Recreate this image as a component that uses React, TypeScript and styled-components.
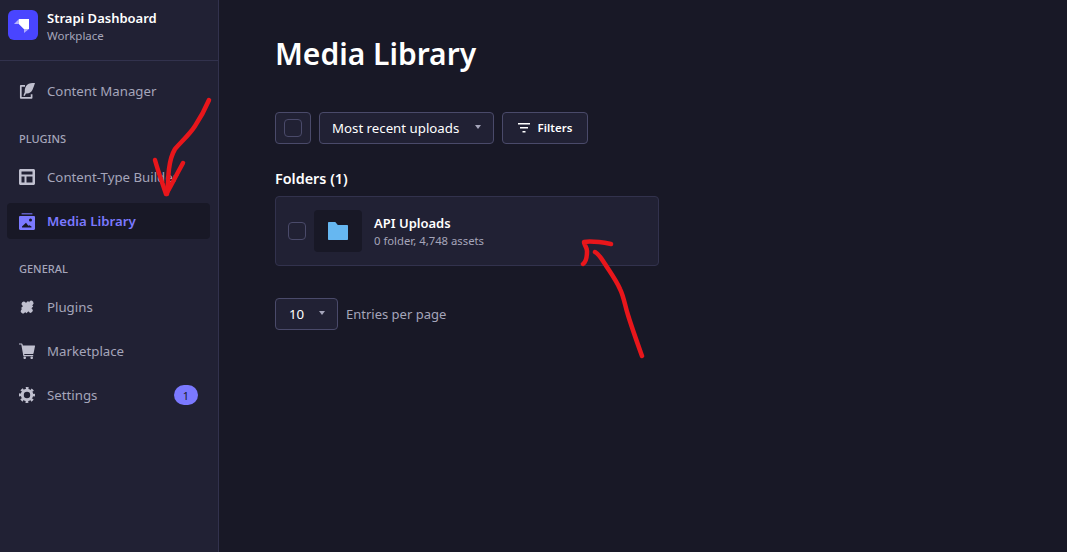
import React from 'react'
import styled, { createGlobalStyle } from 'styled-components'

const Colors = {
  sidebar: '#212134',
  page: '#181826',
  border: '#32324d',
  borderStrong: '#4a4a6a',
  white: '#ffffff',
  label: '#c0c0cf',
  muted: '#a5a5ba',
  primary: '#7b79ff',
  brand: '#4945ff',
  ann: '#e8161b',
}

const GlobalStyle = createGlobalStyle`
  html, body { margin: 0; padding: 0; background: ${Colors.page}; }
  body { font-family: "Noto Sans", "Open Sans", "Liberation Sans", sans-serif; overflow: hidden; }
  * { box-sizing: border-box; }
`

const ContentIcon = () => (
  <svg width="16" height="16" viewBox="0 0 16 16" fill="none">
    <path d="M6 2.800H1.800v12h10.800v-3.500" stroke="currentColor" strokeWidth="1.700" strokeLinejoin="round" />
    <path d="M16 0c-3.800-.2-7.300.5-8.900 3C6 4.800 5.600 7 5.800 9L4.400 12.500l1.200.4L7 10.400c2.800.3 5.200-.8 6.400-3.300C14.500 4.800 15.200 2.400 16 0z" fill="currentColor" />
  </svg>
)

const LayoutIcon = () => (
  <svg width="16" height="16" viewBox="0 0 16 16" fill="none">
    <path fillRule="evenodd" d="M1.500 0h13c.800 0 1.500.700 1.500 1.500v13c0 .800-.700 1.500-1.500 1.500h-13C.700 16 0 15.300 0 14.500v-13C0 .700.700 0 1.500 0zM2.500 2.500v3h11v-3h-11zm0 5v6h3v-6h-3zm5 0v6h6v-6h-6z" fill="currentColor" />
  </svg>
)

const MediaIcon = () => (
  <svg width="16" height="17" viewBox="0 0 16 17" fill="none">
    <rect x="2.500" y="0" width="11" height="1.600" rx=".6" fill="currentColor" opacity=".7" />
    <path fillRule="evenodd" d="M1.200 3h13.600c.700 0 1.200.500 1.200 1.200v11.600c0 .700-.500 1.200-1.200 1.200H1.200C.500 17 0 16.500 0 15.800V4.200C0 3.500.500 3 1.200 3zM11.500 5.500a1.500 1.500 0 1 0 0 3 1.500 1.500 0 0 0 0-3zM3 14.500h9.500v-1l-2-1.300-1.200.6L7 9.800l-4 3.700v1z" fill="currentColor" />
  </svg>
)

const PuzzleIcon = () => (
  <svg width="18" height="18" viewBox="0 0 18 18" fill="none">
    <g transform="rotate(-45 9 9)" fill="currentColor">
      <rect x="3.500" y="5" width="11" height="8.500" rx=".5" />
      <circle cx="9" cy="4" r="2.600" />
      <circle cx="9" cy="14.500" r="2.600" />
      <circle cx="2.500" cy="9.200" r="2.600" />
      <circle cx="15.500" cy="9.200" r="2.600" />
    </g>
  </svg>
)

const CartIcon = () => (
  <svg width="16" height="16" viewBox="0 0 16 16" fill="none">
    <path d="M0 .4h2.800c.3 0 .5.200.6.500L3.900 2.600h11.700c.3 0 .5.300.4.600l-1.500 7.200c-.1.300-.3.500-.6.500H5.200l.2 1.200H14.200v1.200H4.400L2.300 1.600H0V.4z" fill="currentColor" />
    <circle cx="5.700" cy="14.800" r="1.300" fill="currentColor" />
    <circle cx="12.700" cy="14.800" r="1.300" fill="currentColor" />
  </svg>
)

const GearIcon = () => (
  <svg width="16" height="16" viewBox="0 0 16 16" fill="none">
    <circle cx="8" cy="8" r="4.700" stroke="currentColor" strokeWidth="3" />
    <circle cx="8" cy="8" r="6.900" stroke="currentColor" strokeWidth="2.200" strokeDasharray="2.800 2.620" strokeDashoffset="1.400" />
  </svg>
)

const FilterIcon = () => (
  <svg width="12" height="10" viewBox="0 0 12 10" fill="none">
    <rect x="0" y="0" width="12" height="1.500" fill="currentColor" />
    <rect x="2" y="4" width="8" height="1.500" fill="currentColor" />
    <rect x="4.500" y="8" width="3" height="1.500" fill="currentColor" />
  </svg>
)

const FolderIcon = () => (
  <svg width="20" height="18" viewBox="0 0 20 18" fill="none">
    <path d="M0 1c0-.6.4-1 1-1h6.300l2.500 3H19c.6 0 1 .4 1 1v13c0 .6-.4 1-1 1H1c-.6 0-1-.4-1-1V1z" fill="#66b7f1" />
  </svg>
)

const navGroups = [
  { items: [{ label: 'Content Manager', icon: <ContentIcon /> }] },
  {
    title: 'PLUGINS',
    items: [
      { label: 'Content-Type Builder', icon: <LayoutIcon /> },
      { label: 'Media Library', icon: <MediaIcon />, active: true },
    ],
  },
  {
    title: 'GENERAL',
    items: [
      { label: 'Plugins', icon: <PuzzleIcon /> },
      { label: 'Marketplace', icon: <CartIcon /> },
      { label: 'Settings', icon: <GearIcon />, badge: 1 },
    ],
  },
]

export default function App() {
  return (
    <>
      <GlobalStyle />
      <Shell>
        <Sidebar>
          <Brand>
            <BrandLogo>
              <svg width="30" height="30" viewBox="0 0 30 30" fill="none">
                <path d="M11 9h10v10h-5l-5-5V9z" fill="#ffffff" />
                <path d="M11 9v5H6l5-5z" fill="#ffffff" opacity=".6" />
                <path d="M11 14h5v5l-5-5z" fill="#ffffff" opacity=".8" />
                <path d="M16 19h5l-5 4v-4z" fill="#ffffff" opacity=".55" />
              </svg>
            </BrandLogo>
            <BrandText>
              <BrandName>Strapi Dashboard</BrandName>
              <BrandSub>Workplace</BrandSub>
            </BrandText>
          </Brand>
          <Nav>
            {navGroups.map((group, i) => (
              <NavGroup key={i}>
                {group.title && <GroupTitle>{group.title}</GroupTitle>}
                {group.items.map((item: any) => (
                  <NavItem key={item.label} $active={item.active}>
                    <NavIcon>{item.icon}</NavIcon>
                    <NavLabel $active={item.active}>{item.label}</NavLabel>
                    {item.badge && <Badge>{item.badge}</Badge>}
                  </NavItem>
                ))}
              </NavGroup>
            ))}
          </Nav>
        </Sidebar>

        <Main>
          <Title>Media Library</Title>
          <Toolbar>
            <CheckFrame>
              <Checkbox />
            </CheckFrame>
            <SortSelect>
              <SelectText>Most recent uploads</SelectText>
              <Caret />
            </SortSelect>
            <FilterButton>
              <FilterIcon />
              <span>Filters</span>
            </FilterButton>
          </Toolbar>

          <SectionTitle>Folders (1)</SectionTitle>
          <FolderCard>
            <Checkbox />
            <FolderThumb>
              <FolderIcon />
            </FolderThumb>
            <FolderInfo>
              <FolderName>API Uploads</FolderName>
              <FolderMeta>0 folder, 4,748 assets</FolderMeta>
            </FolderInfo>
          </FolderCard>

          <Pager>
            <PageSelect>
              <SelectText>10</SelectText>
              <Caret />
            </PageSelect>
            <PagerLabel>Entries per page</PagerLabel>
          </Pager>
        </Main>

        {/* red marker scribbles drawn on top of the screenshot */}
        <Annotations width="1067" height="552" viewBox="0 0 1067 552" fill="none">
          <path d="M209 100c-3 7-8 17-14 26-5 8-13 15-20 23-3 5-5 12-6 20-1 8-1 18-2 25" />
          <path d="M155 160c3 11 7 22 11 34 3-4 7-13 17-31" />
          <path d="M583 264c3-2 4-8 4-13 0-4-3-6-3-9 6-1 16 0 27 2" />
          <path d="M595 252c4 2 6 6 10 12 5 8 11 16 15 25 4 8 5 17 8 26 4 13 9 27 14 41" />
        </Annotations>
      </Shell>
    </>
  )
}

const Shell = styled.div`
  position: relative;
  display: flex;
  width: 1067px;
  height: 552px;
  background-color: ${Colors.page};
  overflow: hidden;
`

const Sidebar = styled.aside`
  width: 219px;
  flex-shrink: 0;
  background-color: ${Colors.sidebar};
  border-right: 1px solid ${Colors.border};
`

const Brand = styled.div`
  display: flex;
  align-items: center;
  gap: 9px;
  height: 61px;
  padding: 0 0 10px 8px;
  border-bottom: 1px solid ${Colors.border};
`

const BrandLogo = styled.div`
  display: flex;
  width: 30px;
  height: 30px;
  border-radius: 6px;
  background-color: ${Colors.brand};
`

const BrandText = styled.div`
  display: flex;
  flex-direction: column;
  padding-top: 3px;
`

const BrandName = styled.div`
  font-size: 13px;
  line-height: 18px;
  font-weight: 600;
  color: ${Colors.white};
`

const BrandSub = styled.div`
  font-size: 11.5px;
  line-height: 18px;
  color: ${Colors.muted};
`

const Nav = styled.nav`
  display: flex;
  flex-direction: column;
  gap: 22px;
  padding: 12px 8px 0 7px;
`

const NavGroup = styled.div`
  display: flex;
  flex-direction: column;
  gap: 8px;
`

const GroupTitle = styled.div`
  margin-bottom: 4px;
  padding-left: 12px;
  font-size: 11px;
  line-height: 16px;
  font-weight: 500;
  color: ${Colors.muted};
`

const NavItem = styled.div<{ $active?: boolean }>`
  display: flex;
  align-items: center;
  height: 36px;
  padding: 0 12px;
  border-radius: 4px;
  color: ${p => (p.$active ? Colors.primary : Colors.label)};
  background-color: ${p => (p.$active ? Colors.page : 'transparent')};
`

const NavIcon = styled.span`
  display: flex;
  align-items: center;
  justify-content: center;
  width: 16px;
  margin-right: 12px;
`

const NavLabel = styled.span<{ $active?: boolean }>`
  flex: 1;
  font-size: 13.25px;
  font-weight: ${p => (p.$active ? 600 : 400)};
  color: ${p => (p.$active ? Colors.primary : Colors.muted)};
`

const Badge = styled.span`
  display: flex;
  align-items: center;
  justify-content: center;
  width: 24px;
  height: 20px;
  border-radius: 10px;
  font-size: 11px;
  color: ${Colors.page};
  background-color: ${Colors.primary};
`

const Main = styled.main`
  flex: 1;
  padding: 32px 0 0 56px;
`

const Title = styled.h1`
  margin: 0 0 36px;
  font-size: 30px;
  line-height: 44px;
  font-weight: 600;
  color: ${Colors.white};
`

const Toolbar = styled.div`
  display: flex;
  gap: 8px;
  height: 32px;
`

const CheckFrame = styled.div`
  display: flex;
  align-items: center;
  justify-content: center;
  width: 36px;
  border: 1px solid ${Colors.borderStrong};
  border-radius: 4px;
  background-color: ${Colors.sidebar};
`

const Checkbox = styled.span`
  display: block;
  flex-shrink: 0;
  width: 18px;
  height: 18px;
  border: 1px solid ${Colors.borderStrong};
  border-radius: 4px;
  background-color: ${Colors.sidebar};
`

const SortSelect = styled.div`
  display: flex;
  align-items: center;
  justify-content: space-between;
  width: 175px;
  padding: 0 12px;
  border: 1px solid ${Colors.borderStrong};
  border-radius: 4px;
  background-color: ${Colors.sidebar};
`

const SelectText = styled.span`
  font-size: 13.25px;
  color: ${Colors.white};
`

const Caret = styled.span`
  width: 0;
  height: 0;
  margin-top: -2px;
  border-left: 3.5px solid transparent;
  border-right: 3.5px solid transparent;
  border-top: 4px solid ${Colors.muted};
`

const FilterButton = styled.div`
  display: flex;
  align-items: center;
  justify-content: center;
  gap: 8px;
  width: 86px;
  padding-bottom: 1px;
  border: 1px solid ${Colors.borderStrong};
  border-radius: 4px;
  font-size: 11.5px;
  font-weight: 600;
  color: ${Colors.white};
  background-color: ${Colors.sidebar};
`

const SectionTitle = styled.h2`
  margin: 25px 0 7px;
  font-size: 14.4px;
  line-height: 20px;
  font-weight: 600;
  color: ${Colors.white};
`

const FolderCard = styled.div`
  display: flex;
  align-items: center;
  width: 384px;
  height: 70px;
  padding: 0 12px;
  border: 1px solid ${Colors.border};
  border-radius: 4px;
  background-color: ${Colors.sidebar};
`

const FolderThumb = styled.div`
  display: flex;
  align-items: center;
  justify-content: center;
  width: 48px;
  height: 42px;
  margin: 0 12px 0 8px;
  border-radius: 4px;
  background-color: ${Colors.page};
`

const FolderInfo = styled.div`
  display: flex;
  flex-direction: column;
`

const FolderName = styled.div`
  font-size: 13px;
  line-height: 18px;
  font-weight: 600;
  color: ${Colors.white};
`

const FolderMeta = styled.div`
  font-size: 11.3px;
  line-height: 17px;
  color: ${Colors.muted};
`

const Pager = styled.div`
  display: flex;
  align-items: center;
  gap: 8px;
  margin-top: 32px;
`

const PageSelect = styled.div`
  display: flex;
  align-items: center;
  justify-content: space-between;
  width: 63px;
  height: 32px;
  padding: 0 12px 0 13px;
  border: 1px solid ${Colors.borderStrong};
  border-radius: 4px;
  background-color: ${Colors.sidebar};
`

const PagerLabel = styled.span`
  font-size: 13px;
  color: ${Colors.muted};
`

const Annotations = styled.svg`
  position: absolute;
  inset: 0;
  pointer-events: none;

  path {
    stroke: ${Colors.ann};
    stroke-width: 4.5;
    stroke-linecap: round;
    stroke-linejoin: round;
  }
`
